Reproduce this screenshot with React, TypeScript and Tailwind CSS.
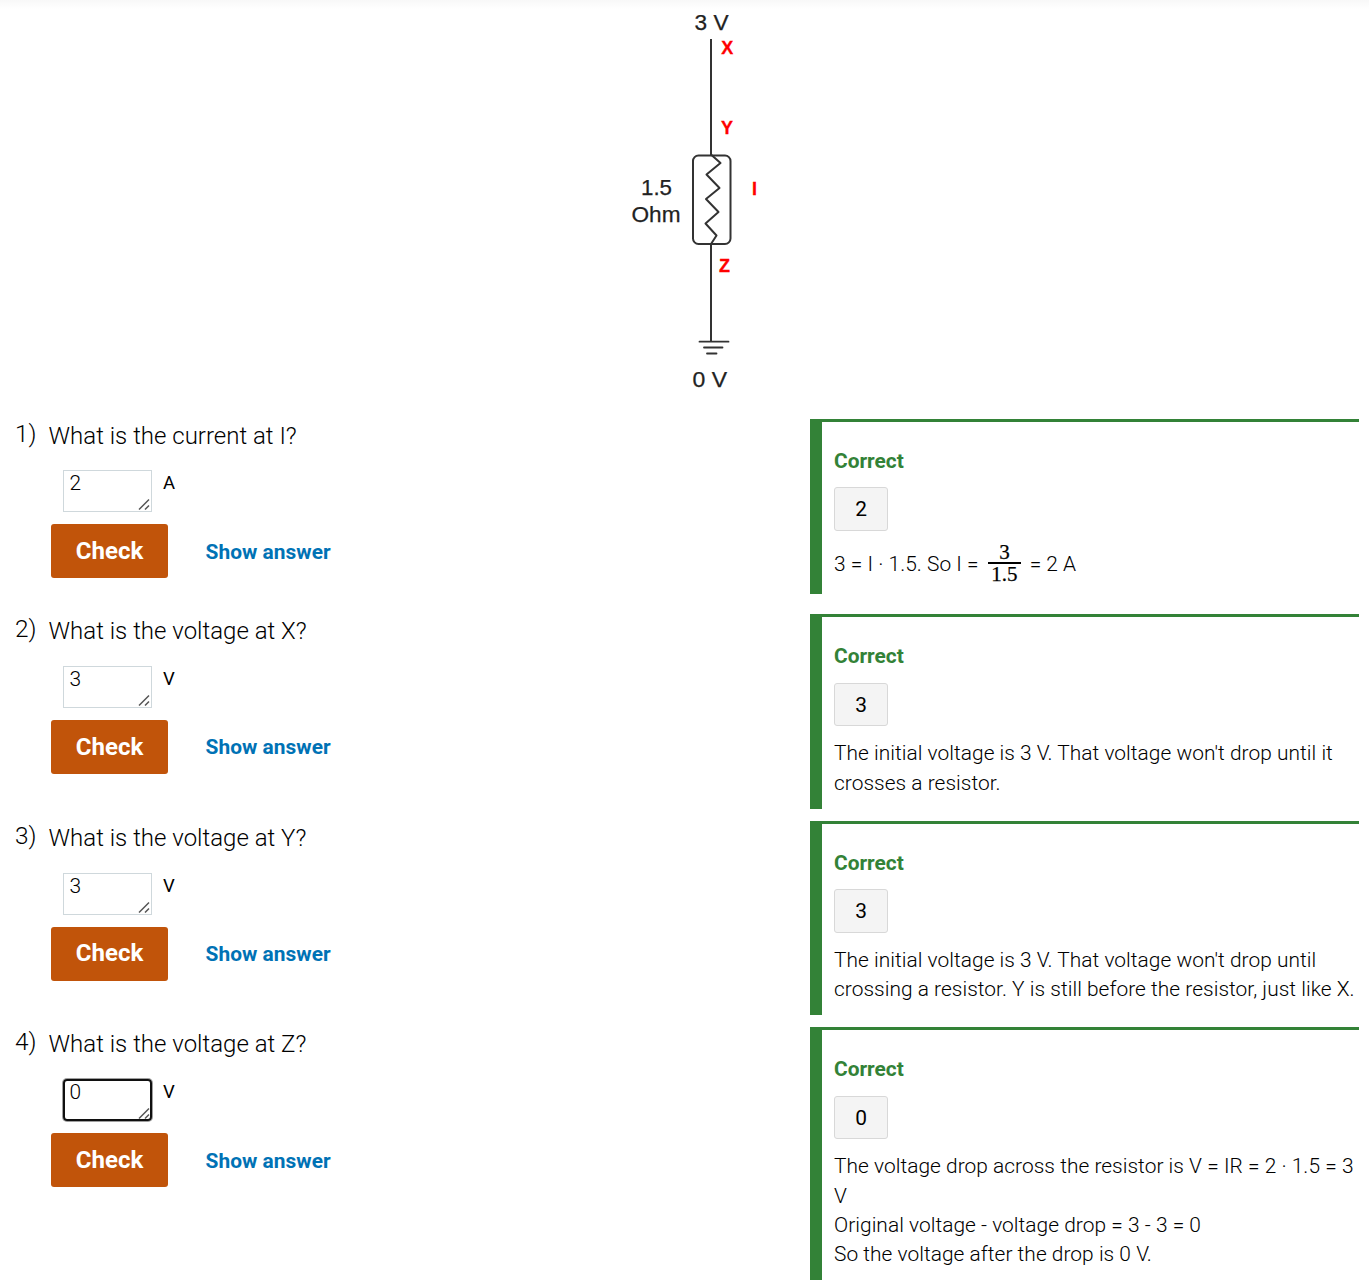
type Item = {
  n: number;
  q: string;
  value: string;
  unit: string;
  height: string;
  cardHeight: string;
  fieldGap: string;
  answerGap: string;
  chip: string;
  linkOffset: string;
  checkPad: string;
  textGap: string;
  focused?: boolean;
  lines: string[];
};

const items: Item[] = [
  { n: 1, q: 'What is the current at I?', value: '2', unit: 'A', height: 'h-[195px]', cardHeight: 'h-[175px]', fieldGap: 'h-[51px]', answerGap: 'h-[68px]', chip: 'h-[44px] pt-px', linkOffset: 'pt-[4px]', checkPad: '', textGap: '', lines: [] },
  { n: 2, q: 'What is the voltage at X?', value: '3', unit: 'V', height: 'h-[207px]', cardHeight: 'h-[195px]', fieldGap: 'h-[52px]', answerGap: 'h-[69px]', chip: 'h-[43px] pt-[2px]', linkOffset: 'pt-[2px]', checkPad: '', textGap: 'pt-[12px] leading-[30px]', lines: ["The initial voltage is 3 V. That voltage won't drop until it", 'crosses a resistor.'] },
  { n: 3, q: 'What is the voltage at Y?', value: '3', unit: 'V', height: 'h-[206px]', cardHeight: 'h-[194px]', fieldGap: 'h-[52px]', answerGap: 'h-[68px]', chip: 'h-[44px] pt-px', linkOffset: 'pt-[2px]', checkPad: 'pb-[2px]', textGap: 'pt-[13px] leading-[29.3px]', lines: ["The initial voltage is 3 V. That voltage won't drop until", 'crossing a resistor. Y is still before the resistor, just like X.'] },
  { n: 4, q: 'What is the voltage at Z?', value: '0', unit: 'V', height: 'h-[253px]', cardHeight: 'h-[253px]', fieldGap: 'h-[52px]', answerGap: 'h-[69px]', chip: 'h-[43px] pt-[2px]', linkOffset: 'pt-[4px]', checkPad: '', textGap: 'pt-[13.300px] leading-[29.3px]', focused: true, lines: ['The voltage drop across the resistor is V = IR = 2 · 1.5 = 3', 'V', 'Original voltage - voltage drop = 3 - 3 = 0', 'So the voltage after the drop is 0 V.'] },
];

function Circuit() {
  return (
    <svg width="180" height="400" viewBox="610 0 180 400" className="ml-[610px] block" fontFamily="Liberation Sans, sans-serif">
      <g fill="none" stroke="#333" strokeWidth="2" strokeLinejoin="round">
        <path d="M711 39V155M711 244V341" />
        <rect x="693" y="155.5" width="37.5" height="88.5" rx="5.5" />
        <path d="M711.5 155L720.5 163L706.5 174.500L719.500 188L706 199L718.500 212L705.500 223.500L716.500 235.500L711 244" />
        <path d="M699.500 341.700H728.500M704 347.500H722.500M707 353.500H716.500" strokeLinecap="round" strokeWidth="1.8" />
      </g>
      <g fill="#222" stroke="#222" strokeWidth="0.25" fontSize="22.500">
        <text x="694.5" y="29.500" textLength="34" lengthAdjust="spacingAndGlyphs">3 V</text>
        <text x="641" y="194.500" textLength="31" lengthAdjust="spacingAndGlyphs">1.5</text>
        <text x="631.5" y="222.300" textLength="49" lengthAdjust="spacingAndGlyphs">Ohm</text>
        <text x="692.5" y="387.300" textLength="34.500" lengthAdjust="spacingAndGlyphs">0 V</text>
      </g>
      <g fill="#f00" stroke="#f00" strokeWidth="0.3" fontSize="18" fontWeight="700">
        <text x="721.2" y="53.500">X</text>
        <text x="721" y="134">Y</text>
        <text x="752" y="194.800">I</text>
        <text x="719" y="271.500">Z</text>
      </g>
    </svg>
  );
}

function AnswerField({ value, focused }: { value: string; focused?: boolean }) {
  return (
    <div className={focused
      ? 'relative h-[42px] w-[89px] rounded-[4px] bg-white ring-1 ring-[#101010]/40 outline-2 -outline-offset-2 outline-[#101010]'
      : 'relative h-[42px] w-[89px] border border-[#cfd8dc] bg-white'}>
      <span className={focused ? 'block pl-[6.500px] text-[20.9px] leading-[26px]' : 'block pl-[5.500px] text-[20.9px] leading-[25px]'}>{value}</span>
      <svg width="12" height="12" viewBox="0 0 12 12" className={focused ? 'absolute right-[2px] bottom-[2px]' : 'absolute right-[1px] bottom-[1px]'}>
        <path d="M1 11.500L11 1.500M7 11.500L11 7.500" stroke="#555" strokeWidth="1.5" fill="none" />
      </svg>
    </div>
  );
}

function Question({ item }: { item: Item }) {
  return (
    <section className={`flex w-[1359px] ${item.height}`}>
      <div className="flex w-[810px] flex-col items-start">
        <div className={`flex shrink-0 pl-[15px] text-[24px] ${item.fieldGap}`}>
          <span className="w-[33.600px] text-[24.4px] leading-[30px]">{item.n})</span>
          <span className="leading-[34px]">{item.q}</span>
        </div>
        <div className="flex pl-[63px]">
          <AnswerField value={item.value} focused={item.focused} />
          <span className="ml-[11px] text-[18.500px] leading-[26px] font-normal">{item.unit}</span>
        </div>
        <div className="mt-3 flex h-[54px] items-center pl-[51px]">
          <button className={`h-[54px] w-[117px] rounded-[3px] bg-[#c1540a] text-[24px] font-bold text-white ${item.checkPad}`}>Check</button>
          <a className={`ml-[37.500px] text-[20.9px] font-bold tracking-[0.04px] text-[#0072b5] ${item.linkOffset}`}>Show answer</a>
        </div>
      </div>
      <div className={`w-[549px] border-t-[3px] border-l-[12px] border-[#338237] pl-3 text-[20.9px] ${item.cardHeight}`}>
        <div className={`-mt-[3px] pt-[27px] leading-[30px] font-bold text-[#338237] ${item.answerGap}`}>Correct</div>
        <div className={`flex w-[54px] items-center justify-center rounded-[3px] border border-[#d8d8d8] bg-[#f4f4f4] font-normal ${item.chip}`}>{item.value}</div>
        {item.lines.length > 0 ? (
          <div className={`whitespace-nowrap tracking-[0.04px] ${item.textGap}`}>
            {item.lines.map((line) => <p key={line}>{line}</p>)}
          </div>
        ) : (
          <div className="flex h-[64px] items-center">
            <span className="pt-[4px] tracking-[0.04px]">3 = I · 1.5. So I =</span>
            <span className="mr-[8.500px] ml-[9px] flex w-[33.500px] flex-col items-center font-['Liberation_Serif',serif] text-[21px] leading-[21px] font-normal [-webkit-text-stroke:0.25px_black]">
              <span className="h-[20px]">3</span>
              <span className="h-[2px] w-full bg-black" />
              <span className="h-[20px]">1.5</span>
            </span>
            <span className="pt-[4px]">= 2 A</span>
          </div>
        )}
      </div>
    </section>
  );
}

export default function App() {
  return (
    <main className="h-[1280px] w-[1369px] overflow-hidden bg-white font-[Roboto,sans-serif] font-light text-black">
      <div className="h-[419px] bg-[linear-gradient(#f8f8f8,#fff_9px)]">
        <Circuit />
      </div>
      {items.map((item) => <Question key={item.n} item={item} />)}
    </main>
  );
}
